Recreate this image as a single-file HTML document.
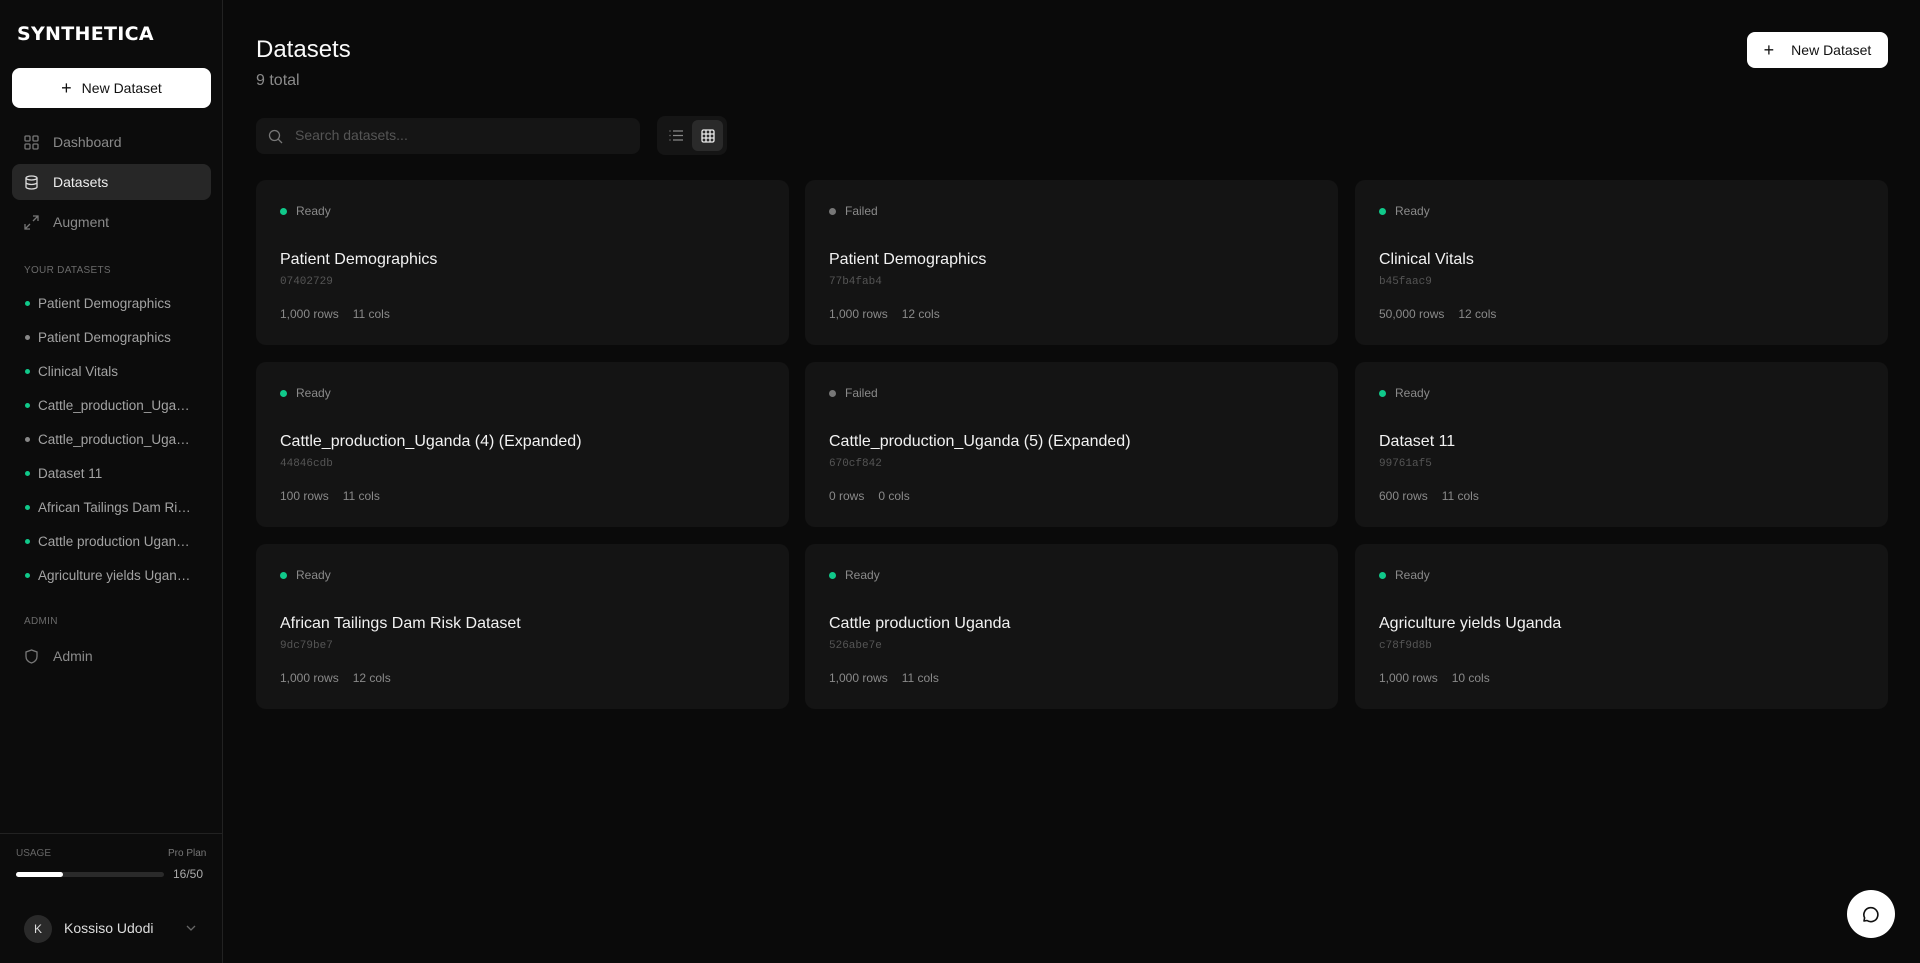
<!DOCTYPE html>
<html><head><meta charset="utf-8"><style>
*{box-sizing:border-box;margin:0;padding:0}
body{width:1920px;height:963px;background:#0a0a0a;font-family:"Liberation Sans",sans-serif;color:#fff;position:relative;overflow:hidden}
.abs{position:absolute}
.sb{left:0;top:0;width:223px;height:963px;background:#0c0c0c;border-right:1px solid #222}
.logo{left:17px;top:23px;font-size:19px;font-weight:700;letter-spacing:0.3px;font-family:"DejaVu Sans","Liberation Sans",sans-serif}
.btn{background:#fff;color:#111;border-radius:8px;display:flex;align-items:center;justify-content:center;font-size:14px}
.nav{left:12px;width:199px;height:36px;border-radius:8px;display:flex;align-items:center;padding-left:12px;font-size:14px;color:#8a8a8a}
.nav svg{margin-right:14px}
.lbl{left:24px;font-size:10px;color:#6a6a6a;letter-spacing:.3px}
.it{left:25px;font-size:13.5px;color:#a3a3a3;display:flex;align-items:center;height:20px;white-space:nowrap}
.it i{width:5px;height:5px;border-radius:50%;background:#10c98a;margin-right:8px;display:inline-block}
.it i.g{background:#888}
.card{width:533px;height:165px;background:#141414;border-radius:10px}
.card .st{position:absolute;left:24px;top:24px;font-size:12px;color:#8a8a8a;display:flex;align-items:center}
.card .st i{width:7px;height:7px;border-radius:50%;background:#10c98a;margin-right:9px}
.card .st i.g{background:#777}
.card .t{position:absolute;left:24px;top:71px;font-size:16px;color:#f2f2f2}
.card .h{position:absolute;left:24px;top:96px;font-size:11px;color:#555;font-family:"Liberation Mono",monospace}
.card .s{position:absolute;left:24px;top:127px;font-size:12px;color:#8a8a8a}
.card .s span{margin-right:14px}
</style></head><body>
<div class="abs sb"></div>
<div class="abs logo">SYNTHETICA</div>
<div class="abs btn" style="left:12px;top:68px;width:199px;height:40px"><span style="font-size:18px;margin-right:10px">+</span>New Dataset</div>
<div class="abs nav" style="top:124px"><svg width="15" height="15" viewBox="0 0 15 15" fill="none" stroke="#777" stroke-width="1.3"><rect x="1" y="1" width="5" height="5" rx="1"/><rect x="9" y="1" width="5" height="5" rx="1"/><rect x="1" y="9" width="5" height="5" rx="1"/><rect x="9" y="9" width="5" height="5" rx="1"/></svg>Dashboard</div>
<div class="abs nav" style="top:164px;background:#272727;color:#eee"><svg width="15" height="15" viewBox="0 0 15 15" fill="none" stroke="#ddd" stroke-width="1.3"><ellipse cx="7.5" cy="3" rx="5.5" ry="2"/><path d="M2 3v9c0 1.1 2.5 2 5.5 2s5.5-.9 5.5-2V3M2 7.5c0 1.1 2.5 2 5.5 2s5.5-.9 5.5-2"/></svg>Datasets</div>
<div class="abs nav" style="top:204px"><svg width="15" height="15" viewBox="0 0 15 15" fill="none" stroke="#777" stroke-width="1.3"><path d="M9 1h5v5M14 1L9 6M6 14H1V9M1 14l5-5"/></svg>Augment</div>
<div class="abs lbl" style="top:265px">YOUR DATASETS</div>
<div class="abs it" style="top:293px"><i></i>Patient Demographics</div>
<div class="abs it" style="top:327px"><i class="g"></i>Patient Demographics</div>
<div class="abs it" style="top:361px"><i></i>Clinical Vitals</div>
<div class="abs it" style="top:395px"><i></i>Cattle_production_Uga…</div>
<div class="abs it" style="top:429px"><i class="g"></i>Cattle_production_Uga…</div>
<div class="abs it" style="top:463px"><i></i>Dataset 11</div>
<div class="abs it" style="top:497px"><i></i>African Tailings Dam Ri…</div>
<div class="abs it" style="top:531px"><i></i>Cattle production Ugan…</div>
<div class="abs it" style="top:565px"><i></i>Agriculture yields Ugan…</div>
<div class="abs lbl" style="top:616px">ADMIN</div>
<div class="abs nav" style="top:638px"><svg width="15" height="15" viewBox="0 0 15 15" fill="none" stroke="#777" stroke-width="1.3"><path d="M7.5 1L2 3v4.5c0 3.5 2.5 5.5 5.5 6.5 3-1 5.5-3 5.5-6.5V3z"/></svg>Admin</div>
<div class="abs" style="left:0;top:833px;width:223px;border-top:1px solid #222"></div>
<div class="abs" style="left:16px;top:848px;font-size:10px;color:#666">USAGE</div>
<div class="abs" style="left:168px;top:848px;font-size:10px;color:#777">Pro Plan</div>
<div class="abs" style="left:16px;top:872px;width:148px;height:5px;border-radius:3px;background:#2a2a2a"><div style="width:47px;height:5px;border-radius:3px;background:#fff"></div></div>
<div class="abs" style="left:173px;top:867px;font-size:12px;color:#aaa">16/50</div>
<div class="abs" style="left:24px;top:915px;width:28px;height:28px;border-radius:50%;background:#2a2a2a;font-size:12px;display:flex;align-items:center;justify-content:center;color:#ddd">K</div>
<div class="abs" style="left:64px;top:920px;font-size:14px;color:#ddd">Kossiso Udodi</div>
<svg class="abs" style="left:185px;top:924px" width="12" height="8" viewBox="0 0 12 8" fill="none" stroke="#666" stroke-width="1.3"><path d="M2 2l4 4 4-4"/></svg>

<div class="abs" style="left:256px;top:36px;font-size:24px;color:#fafafa">Datasets</div>
<div class="abs" style="left:256px;top:72px;font-size:16px;color:#8a8a8a">9 total</div>
<div class="abs btn" style="left:1747px;top:32px;width:141px;height:36px;font-size:14px"><span style="font-size:18px;margin-right:17px">+</span>New Dataset</div>
<div class="abs" style="left:256px;top:118px;width:384px;height:36px;border-radius:8px;background:#151515"></div>
<svg class="abs" style="left:268px;top:129px" width="15" height="15" viewBox="0 0 15 15" fill="none" stroke="#777" stroke-width="1.3"><circle cx="6.5" cy="6.5" r="5"/><path d="M10.3 10.3L14 14"/></svg>
<div class="abs" style="left:295px;top:127px;font-size:14px;color:#555">Search datasets...</div>
<div class="abs" style="left:657px;top:116px;width:70px;height:39px;border-radius:8px;background:#151515"></div>
<div class="abs" style="left:692px;top:120px;width:31px;height:31px;border-radius:6px;background:#2a2a2a"></div>
<svg class="abs" style="left:669px;top:129px" width="14" height="13" viewBox="0 0 14 13" fill="none" stroke="#888" stroke-width="1.2"><path d="M4 2h10M4 6.5h10M4 11h10M0.5 2h1M0.5 6.5h1M0.5 11h1"/></svg>
<svg class="abs" style="left:701px;top:129px" width="14" height="14" viewBox="0 0 14 14" fill="none" stroke="#eee" stroke-width="1.3"><rect x="1" y="1" width="12" height="12" rx="1.5"/><path d="M5 1v12M9 1v12M1 5h12M1 9h12"/></svg>

<div class="abs card" style="left:256px;top:180px"><div class="st"><i></i>Ready</div><div class="t">Patient Demographics</div><div class="h">07402729</div><div class="s"><span>1,000 rows</span><span>11 cols</span></div></div>
<div class="abs card" style="left:805px;top:180px"><div class="st"><i class="g"></i>Failed</div><div class="t">Patient Demographics</div><div class="h">77b4fab4</div><div class="s"><span>1,000 rows</span><span>12 cols</span></div></div>
<div class="abs card" style="left:1355px;top:180px"><div class="st"><i></i>Ready</div><div class="t">Clinical Vitals</div><div class="h">b45faac9</div><div class="s"><span>50,000 rows</span><span>12 cols</span></div></div>
<div class="abs card" style="left:256px;top:362px"><div class="st"><i></i>Ready</div><div class="t">Cattle_production_Uganda (4) (Expanded)</div><div class="h">44846cdb</div><div class="s"><span>100 rows</span><span>11 cols</span></div></div>
<div class="abs card" style="left:805px;top:362px"><div class="st"><i class="g"></i>Failed</div><div class="t">Cattle_production_Uganda (5) (Expanded)</div><div class="h">670cf842</div><div class="s"><span>0 rows</span><span>0 cols</span></div></div>
<div class="abs card" style="left:1355px;top:362px"><div class="st"><i></i>Ready</div><div class="t">Dataset 11</div><div class="h">99761af5</div><div class="s"><span>600 rows</span><span>11 cols</span></div></div>
<div class="abs card" style="left:256px;top:544px"><div class="st"><i></i>Ready</div><div class="t">African Tailings Dam Risk Dataset</div><div class="h">9dc79be7</div><div class="s"><span>1,000 rows</span><span>12 cols</span></div></div>
<div class="abs card" style="left:805px;top:544px"><div class="st"><i></i>Ready</div><div class="t">Cattle production Uganda</div><div class="h">526abe7e</div><div class="s"><span>1,000 rows</span><span>11 cols</span></div></div>
<div class="abs card" style="left:1355px;top:544px"><div class="st"><i></i>Ready</div><div class="t">Agriculture yields Uganda</div><div class="h">c78f9d8b</div><div class="s"><span>1,000 rows</span><span>10 cols</span></div></div>

<div class="abs" style="left:1847px;top:890px;width:48px;height:48px;border-radius:50%;background:#fff"></div>
<svg class="abs" style="left:1862px;top:905px" width="18" height="18" viewBox="0 0 18 18" fill="none" stroke="#111" stroke-width="1.6" stroke-linejoin="round"><path d="M5 15.5L2 16l.6-3.2A7 7 0 1 1 5 15.5z"/></svg>
</body></html>
